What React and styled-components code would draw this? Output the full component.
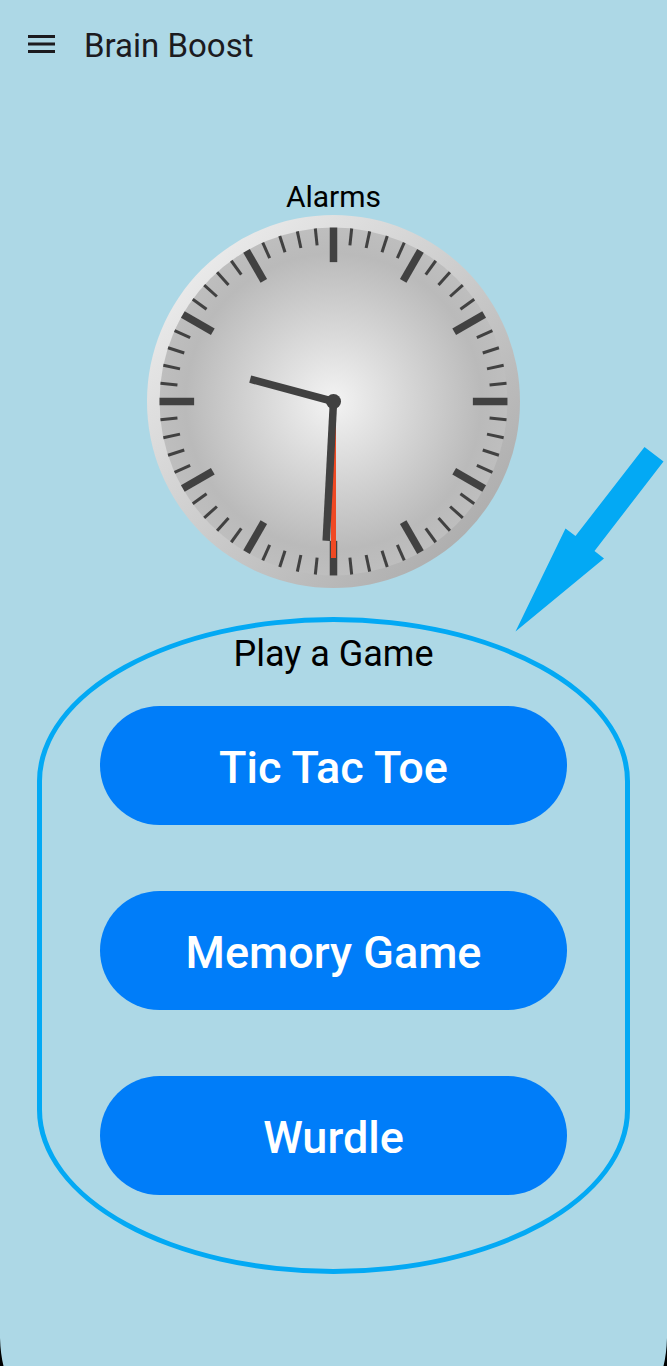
import React from "react";
import styled, { createGlobalStyle } from "styled-components";

const GlobalStyle = createGlobalStyle`
  *, *::before, *::after { box-sizing: border-box; }
  body { margin: 0; background: #add8e6; font-family: Roboto, sans-serif; }
`;

const Screen = styled.div`
  position: relative;
  display: flex;
  flex-direction: column;
  min-height: 100vh;
  overflow: hidden;
  background: #add8e6;
`;

const AppBar = styled.header`
  display: flex;
  align-items: center;
  gap: 20px;
  height: 92px;
  padding: 0 20px;
`;

const MenuButton = styled.button`
  display: flex;
  align-items: center;
  justify-content: center;
  width: 44px;
  height: 44px;
  padding: 0;
  border: 0;
  background: none;
  color: #1c1b1f;
  cursor: pointer;
`;

const Title = styled.h1`
  margin: 0;
  font-size: 33px;
  font-weight: 400;
  line-height: 40px;
  color: #1c1b1f;
`;

const Content = styled.main`
  display: flex;
  flex-direction: column;
  align-items: center;
  padding: 87px 37px 92px;
`;

const SectionTitle = styled.h2`
  margin: 0;
  font-size: ${(p) => (p.$large ? 36 : 30)}px;
  font-weight: 400;
  line-height: ${(p) => (p.$large ? 44 : 36)}px;
  text-align: center;
  color: #000;
`;

const ClockFace = styled.svg`
  display: block;
  width: 373px;
  max-width: 100%;
`;

const Games = styled.section`
  position: relative;
  width: 100%;
  margin-top: 29px;
  padding: 10px 58px 74px;
  border: 5px solid #03a9f4;
  border-radius: 50% / 25%;
`;

const GameList = styled.div`
  display: flex;
  flex-direction: column;
  gap: 66px;
  margin-top: 30px;
`;

const GameButton = styled.button`
  width: 100%;
  height: 119px;
  padding: 4px 0 0;
  border: 0;
  border-radius: 60px;
  background: #007df9;
  color: #fff;
  font-family: inherit;
  font-size: 45px;
  font-weight: 500;
  cursor: pointer;
`;

const Pointer = styled.svg`
  position: absolute;
  right: -40px;
  bottom: calc(100% - 10px);
  width: 150px;
  height: 186px;
  pointer-events: none;
`;

const ScreenCorner = styled.svg`
  position: absolute;
  bottom: 0;
  ${(p) => (p.$right ? "right: 0; transform: scaleX(-1);" : "left: 0;")}
  width: 4px;
  height: 28px;
`;

function MenuIcon() {
  return (
    <svg width="28" height="22" viewBox="0 0 28 22" fill="currentColor" aria-hidden="true">
      <path d="M0 0h27v3h-27zM0 7.5h27v3h-27zM0 15h27v3h-27z" />
    </svg>
  );
}

function Clock() {
  const ticks = Array.from({ length: 60 }, (_, i) => i);
  return (
    <ClockFace viewBox="-186 -186 372 372" role="img" aria-label="Clock showing 9:30">
      <defs>
        <linearGradient id="rim" x1="0" y1="0" x2="1" y2="1">
          <stop offset="0" stopColor="#f5f5f5" />
          <stop offset="1" stopColor="#a3a3a3" />
        </linearGradient>
        <radialGradient id="dial">
          <stop offset="0" stopColor="#f3f3f3" />
          <stop offset="0.85" stopColor="#bababa" />
          <stop offset="1" stopColor="#bebebe" />
        </radialGradient>
      </defs>
      <circle r="186" fill="url(#rim)" />
      <circle r="173.5" fill="url(#dial)" />
      {ticks.map((i) => {
        const major = i % 5 === 0;
        return (
          <line
            key={i}
            y1="-173.5"
            y2={major ? -139 : -156.5}
            stroke="#414141"
            strokeWidth={major ? 7.5 : 3}
            transform={`rotate(${i * 6})`}
          />
        );
      })}
      <line y2="-156" stroke="#f04923" strokeWidth="5" transform="rotate(180)" />
      <line y2="-86" stroke="#414141" strokeWidth="7.5" transform="rotate(285)" />
      <line y2="-139" stroke="#414141" strokeWidth="7.5" transform="rotate(183)" />
      <circle r="7.5" fill="#414141" />
    </ClockFace>
  );
}

const games = ["Tic Tac Toe", "Memory Game", "Wurdle"];

export default function App() {
  return (
    <>
      <GlobalStyle />
      <Screen>
        <AppBar>
          <MenuButton type="button" aria-label="Open menu">
            <MenuIcon />
          </MenuButton>
          <Title>Brain Boost</Title>
        </AppBar>
        <Content>
          <SectionTitle>Alarms</SectionTitle>
          <Clock />
          <Games>
            <SectionTitle $large>Play a Game</SectionTitle>
            <GameList>
              {games.map((name) => (
                <GameButton key={name} type="button">
                  {name}
                </GameButton>
              ))}
            </GameList>
            <Pointer viewBox="0 0 150 186" aria-hidden="true">
              <path
                d="M0.5 185.5 50.5 82.5 60.5 90 129.5 1 148.5 15.5 79.5 105 89 112.5z"
                fill="#03a9f4"
              />
            </Pointer>
          </Games>
        </Content>
        <ScreenCorner viewBox="0 0 4 28" aria-hidden="true">
          <path d="M0 0Q0.5 16 3.5 28H0z" />
        </ScreenCorner>
        <ScreenCorner $right viewBox="0 0 4 28" aria-hidden="true">
          <path d="M0 0Q0.5 16 3.5 28H0z" />
        </ScreenCorner>
      </Screen>
    </>
  );
}
